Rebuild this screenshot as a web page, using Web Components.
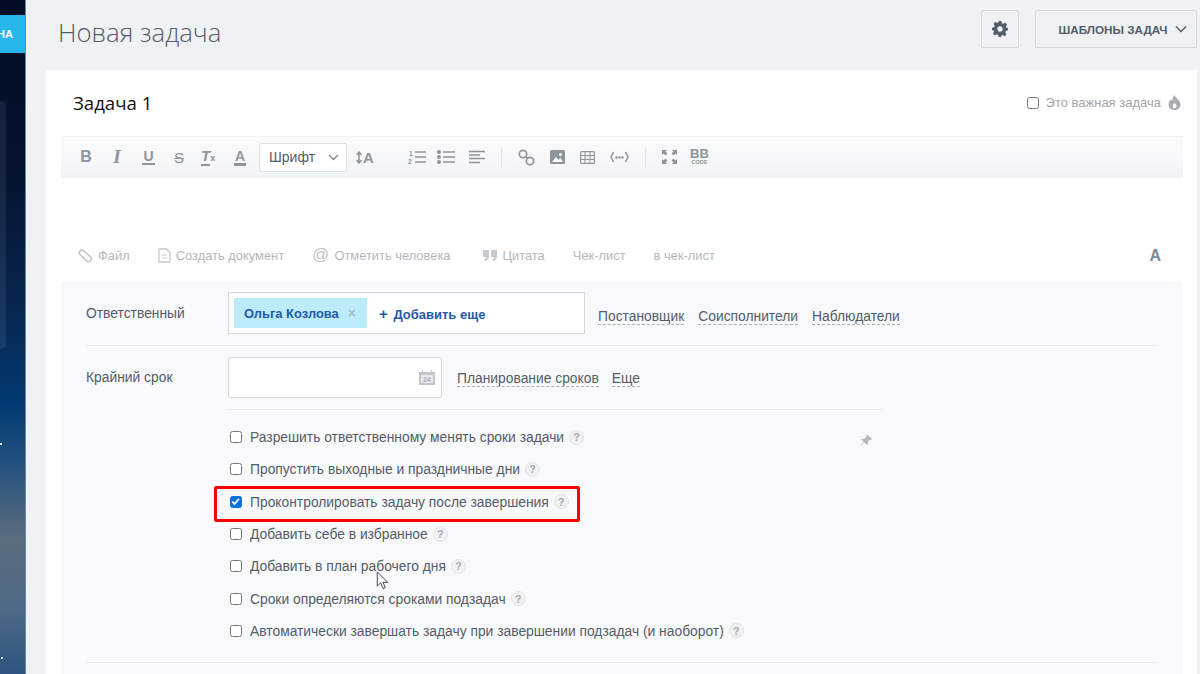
<!DOCTYPE html>
<html lang="ru"><head><meta charset="utf-8"><style>
html,body{margin:0;padding:0;width:1200px;height:674px;overflow:hidden;background:#eef2f4}
</style></head><body>
<task-page></task-page>
<script>
const def=(name,css,html)=>{customElements.define(name,class extends HTMLElement{constructor(){super();const r=this.attachShadow({mode:'open'});r.innerHTML='<style>'+css+'</style>'+html}})};
def('help-mark',':host{display:inline-flex;width:15px;height:15px;border-radius:50%;background:#eff1f3;border:1px solid #e2e5e8;box-sizing:border-box;align-items:center;justify-content:center;font:bold 10.5px "Liberation Sans",sans-serif;color:#a4a9ae;margin-left:5px;flex:none}','?');
def('check-row',`:host{display:flex;align-items:center;height:32.3px;font:13.83px "Liberation Sans",Arial,sans-serif;color:#535c69;white-space:nowrap}
.b{width:12px;height:12px;border:1.5px solid #767676;border-radius:2.5px;background:#fff;margin:0 8px 0 2px;flex:none;box-sizing:border-box;display:flex}
:host([checked]) .b{background:#0b6fde;border-color:#0b6fde}svg{display:none}:host([checked]) svg{display:block}`,
`<span class="b"><svg width="9" height="9" viewBox="0 0 9 9"><path d="M1.2 4.6 3.6 7 7.9 1.8" fill="none" stroke="#fff" stroke-width="1.8"/></svg></span><slot></slot><help-mark></help-mark>`);
def('dash-link',':host{display:inline-block;font:13.83px "Liberation Sans",Arial,sans-serif;color:#535c69;border-bottom:1px dashed #a9b0b8;line-height:16px;white-space:nowrap}','<slot></slot>');
def('foot-item',':host{display:inline-flex;align-items:center;gap:5px;font:12.9px "Liberation Sans",Arial,sans-serif;color:#b5b8bc;white-space:nowrap}','<slot></slot>');
def('task-toolbar',`:host{display:flex;align-items:center;height:42px;padding-left:18px;background:linear-gradient(#fafbfb,#f1f4f6);box-shadow:inset 0 1px 0 #f0f2f4;flex:none}
.g{font:bold 15px "Liberation Sans",Arial,sans-serif;color:#8d949c;flex:none;text-align:center}
.gl{display:flex;align-items:center;width:180px;flex:none}
.sel{width:88px;height:29px;background:#fff;border:1px solid #dfe2e5;border-radius:2px;box-sizing:border-box;display:flex;align-items:center;justify-content:space-between;padding:0 7px 0 9px;font:14px "Liberation Sans",Arial,sans-serif;color:#535c69;flex:none}
.sep{width:1px;height:19px;background:#e3e6e9;flex:none}
svg{display:block;flex:none}`,
`<div class="gl">
<span class="g" style="width:14px;font-size:16px">B</span>
<span class="g" style="width:14px;margin-left:17px;font:italic bold 19px/16px 'Liberation Serif',serif">I</span>
<span class="g" style="width:13px;margin-left:18px;font-size:14px;line-height:13px;border-bottom:2px solid #8d949c">U</span>
<span class="g" style="width:14px;margin-left:17px;font-weight:normal;font-size:15px;text-decoration:line-through">S</span>
<span class="g" style="width:17px;margin-left:15px;font:italic bold 15px/14px 'Liberation Sans',sans-serif;white-space:nowrap;text-align:left"><span style="border-bottom:2px solid #8d949c">T</span><span style="font-size:9px;font-style:normal">x</span></span>
<span class="g" style="width:12px;margin-left:16px;font-weight:bold;font-size:14px;line-height:14px;border-bottom:3px solid #8d949c">A</span>
</div>
<div class="sel"><span>Шрифт</span><svg width="11" height="7" viewBox="0 0 11 7"><path d="M1 1l4.500 4.500L10 1" fill="none" stroke="#7f868e" stroke-width="1.300"/></svg></div>
<span class="g" style="margin-left:9px;display:flex;align-items:center;font-size:15px;width:20px;white-space:nowrap"><svg width="6" height="13" viewBox="0 0 6 13" style="margin-right:1px"><path d="M3 1v11M.5 4 3 1l2.500 3M.5 9 3 12l2.500-3" fill="none" stroke="#8d949c" stroke-width="1.500"/></svg>A</span>
<svg style="margin-left:32px" width="18" height="14" viewBox="0 0 18 14"><path d="M7 2h11M7 7h11M7 12h11" fill="none" stroke="#8d949c" stroke-width="1.700"/><text x="1" y="6" font-size="6.500" font-family="Liberation Sans" font-weight="bold" fill="#8d949c">1</text><text x="0" y="13.500" font-size="6.500" font-family="Liberation Sans" font-weight="bold" fill="#8d949c">2</text></svg>
<svg style="margin-left:11px" width="18" height="14" viewBox="0 0 18 14"><g fill="#8d949c"><circle cx="2" cy="2" r="2"/><circle cx="2" cy="7" r="2"/><circle cx="2" cy="12" r="2"/></g><path d="M6 2h12M6 7h12M6 12h12" stroke="#8d949c" stroke-width="1.700"/></svg>
<svg style="margin-left:14px" width="16" height="14" viewBox="0 0 16 14"><path d="M0 1.500h16M0 5h11M0 8.500h16M0 12.500h11" stroke="#8d949c" stroke-width="1.600"/></svg>
<span class="sep" style="margin-left:16px"></span>
<svg style="margin-left:16px" width="17" height="17" viewBox="0 0 17 17"><g fill="none" stroke="#8d949c" stroke-width="1.700"><circle cx="5" cy="5" r="3.700"/><circle cx="12" cy="12" r="3.700"/><path d="M7.500 7.500l2 2"/></g></svg>
<svg style="margin-left:15px" width="15" height="14" viewBox="0 0 15 14"><rect width="15" height="14" rx="1.500" fill="#8d949c"/><path d="M2 12l4-5 2.500 3 2-2L13 12z" fill="#fff"/><circle cx="10.500" cy="4.500" r="1.500" fill="#fff"/></svg>
<svg style="margin-left:15px" width="15" height="13" viewBox="0 0 15 13"><rect x=".6" y=".6" width="13.800" height="11.800" rx="1" fill="none" stroke="#8d949c" stroke-width="1.200"/><path d="M.6 4.500h13.800M.6 8.500h13.800M5 .6v11.800M10 .6v11.800" stroke="#8d949c" stroke-width="1"/></svg>
<svg style="margin-left:15px" width="19" height="12" viewBox="0 0 19 12"><path d="M3.500 1 1 6l2.500 5M15.500 1 18 6l-2.500 5" fill="none" stroke="#8d949c" stroke-width="1.500"/><g fill="#8d949c"><circle cx="6.500" cy="6.500" r="1.200"/><circle cx="9.500" cy="6.500" r="1.200"/><circle cx="12.500" cy="6.500" r="1.200"/></g></svg>
<span class="sep" style="margin-left:16px"></span>
<svg style="margin-left:16px" width="15" height="14" viewBox="0 0 15 14"><g fill="#8d949c"><path d="M0 0h5L3.500 1.500 5.500 3.500 3.500 5.500 1.500 3.500 0 5zM15 0h-5l1.500 1.500L9.500 3.500l2 2 2-2L15 5zM0 14h5l-1.500-1.500 2-2-2-2-2 2L0 9zM15 14h-5l1.500-1.500-2-2 2-2 2 2L15 9z"/></g></svg>
<span style="margin-left:14px;display:flex;flex-direction:column;align-items:center;color:#8d949c;width:17px;flex:none"><span style="font:bold 13px/11px 'Liberation Sans',sans-serif">BB</span><span style="font:bold 5.500px/7px 'Liberation Sans',sans-serif">CODE</span></span>`);
def('task-page',`:host{display:block;position:relative;width:1200px;height:674px;overflow:hidden;font-family:"Liberation Sans",Arial,sans-serif}
.wrap{display:flex;height:674px}
.side{width:25px;flex:none;border-right:1px solid #6e8294;position:relative;background:linear-gradient(#010d26 0,#04132f 25%,#07264f 45%,#033a72 60%,#1f4f7e 68%,#5c6d7e 80%,#4e6a87 90%,#2d557f 100%);overflow:hidden}
.brand{background:#27b6ea;height:38px;margin-top:15px;display:flex;align-items:center;justify-content:flex-end;padding-right:12px;font:bold 11px "Liberation Sans",sans-serif;color:#fff;white-space:nowrap;overflow:hidden}
.pan{position:absolute;left:-20px;top:101px;width:26px;height:248px;border-radius:5px;background:rgba(255,255,255,.07)}
.dot{position:absolute;width:2px;height:2px;background:#d8dde2}
.main{flex:1;min-width:0;background:#eef2f4;border-left:1px solid #f4f6f7;display:flex;flex-direction:column}
.hd{height:70px;box-sizing:border-box;display:flex;align-items:center;flex:none;padding:0 3px 12px 31px}
h1{margin:6px 0 0;font:300 25.7px "Open Sans",sans-serif;color:#535c69;flex:1;white-space:nowrap}
.btn{height:38px;border:1px solid #d5dade;border-radius:2px;background:#eef2f4;box-sizing:border-box;display:flex;align-items:center;justify-content:center;flex:none}
.card{margin:0 3px 0 19px;background:#fff;flex:1;display:flex;flex-direction:column;min-height:0}
.top{height:66px;flex:none;display:flex;align-items:center;padding:0 16px 1px 27px;box-sizing:border-box}
.name{font:18.6px "Open Sans",sans-serif;color:#111;flex:1}
.imp{display:flex;align-items:center;font:13px "Liberation Sans",sans-serif;color:#a2a6ab}
.cb{width:12px;height:12px;border:1.500px solid #767676;border-radius:2.500px;margin-right:7px;box-sizing:border-box}
.edit{margin:0 14px 0 15px;display:flex;flex-direction:column;flex:1}
.blank{height:57px;flex:none}
.foot{height:40px;display:flex;align-items:center;padding:0 22px 0 17px;flex:none;margin-bottom:7px}
.foot foot-item{margin-right:28px}
.foot foot-item.wide{margin-right:33px}
.A{margin-left:auto;font:bold 16px "Liberation Sans",sans-serif;color:#7f8790;padding-top:1px}
.panel{background:#f8f9fb;flex:1;padding:0 26px 0 25px}
.row{display:flex;position:relative}
.r1{height:64px;border-bottom:1px solid #e8eaed;box-sizing:border-box;padding-top:10px}
.lab{width:142px;font:13.83px "Liberation Sans",sans-serif;color:#535c69;flex:none;padding-top:13px}
.box{background:#fff;border:1px solid #d5d9dd;box-sizing:border-box}
.r1 .box{width:357px;height:42px;display:flex;align-items:center;padding:0 5px;flex:none}
.tag{height:30px;background:#bcebfc;display:flex;align-items:center;padding:0 11px 0 10px;font:bold 12.9px "Liberation Sans",sans-serif;color:#1f5aa8;white-space:nowrap;width:133px;box-sizing:border-box;justify-content:space-between}
.x{color:#a3bcc8;font:bold 14px "Liberation Sans",sans-serif}
.add{margin-left:12px;font:bold 13px "Liberation Sans",sans-serif;color:#1f5aa8;white-space:nowrap}
.plus{font-size:15px;margin-right:2px}
.links{display:flex;gap:14px;margin-left:13px;padding-top:16px;align-items:flex-start}
.r2{height:64px;padding-top:11px;box-sizing:border-box}
.r2 .box{width:214px;height:41px;border-radius:2px;display:flex;align-items:center;justify-content:flex-end;padding-right:6px;flex:none}
.r2 .lab{padding-top:12px}
.r2 .links{padding-top:13px;margin-left:15px;gap:13px}
.opts{margin-left:142px;width:655px;border-top:1px solid #e8eaed;padding-top:11px;position:relative;margin-top:-1px}
.pin{position:absolute;left:631px;top:24px}
.hr{height:1px;background:#e8eaed;margin-top:15px}
.red{position:absolute;left:214px;top:486px;width:366px;height:36px;border:3px solid #f00;border-radius:2px;box-sizing:border-box;pointer-events:none}
.cur{position:absolute;left:376px;top:571px}`,
`<div class="wrap">
<aside class="side"><div class="brand">НА</div><div class="pan"></div><span class="dot" style="left:0;top:443px"></span><span class="dot" style="left:1px;top:657px"></span></aside>
<main class="main">
<header class="hd"><h1>Новая задача</h1>
<div class="btn" style="width:38px;margin-right:16px"><svg width="16" height="16" viewBox="0 0 24 24"><path fill="#535c69" fill-rule="evenodd" d="M10 0h4l.7 3.300 2.300 1 2.900-1.800 2.800 2.800-1.800 2.900 1 2.300L24 10v4l-3.100.7-1 2.300 1.800 2.900-2.800 2.800-2.900-1.800-2.300 1L14 24h-4l-.7-3.100-2.300-1-2.900 1.800-2.800-2.800L3.100 16l-1-2.300L0 14v-4l3.100-.7 1-2.300-1.800-2.900 2.800-2.800L7 3.100l2.300-1zM12 8a4 4 0 1 0 0 8 4 4 0 0 0 0-8z"/></svg></div>
<div class="btn" style="width:162px;font:bold 11.7px 'Liberation Sans',sans-serif;color:#535c69;gap:7px;padding-left:13px;white-space:nowrap">ШАБЛОНЫ ЗАДАЧ<svg width="12" height="8" viewBox="0 0 12 8"><path d="M1 1.500l5 5 5-5" fill="none" stroke="#535c69" stroke-width="1.400"/></svg></div>
</header>
<section class="card">
<div class="top"><div class="name">Задача 1</div><div class="imp"><span class="cb"></span>Это важная задача<svg style="margin-left:7px" width="13" height="15" viewBox="0 0 13 15"><path fill-rule="evenodd" fill="#a9adb2" d="M6.500 0c.5 2.500 6 5 6 9.500a6 5.500 0 0 1-12 0C.5 7 2 5.500 3 4c.3 1 .8 1.500 1.300 1.800C4.500 3.500 5 1.500 6.500 0zm0 8C5 9.500 4.500 10.300 4.500 11.300a2 2 0 0 0 4 0C8.500 10.300 8 9.500 6.500 8z"/></svg></div></div>
<div class="edit">
<task-toolbar></task-toolbar>
<div class="blank"></div>
<div class="foot">
<foot-item><svg width="15" height="17" viewBox="0 0 15 17"><path d="M5.500 11 2.200 6.800a2.600 2.600 0 0 1 4-3.300l5.800 7a2.800 2.800 0 0 1-4.300 3.600L3.500 9" transform="rotate(-10 7 8)" fill="none" stroke="#c6c9cc" stroke-width="1.700"/></svg>Файл</foot-item>
<foot-item><svg width="13" height="15" viewBox="0 0 13 15"><path d="M1 1h7.500L12 4.500V14H1z" fill="none" stroke="#c6c9cc" stroke-width="1.300"/><path d="M4 7h5M4 10h5" stroke="#c6c9cc"/></svg>Создать документ</foot-item>
<foot-item class="wide"><span style="font:17px 'Liberation Sans',sans-serif;color:#c0c3c7">@</span>Отметить человека</foot-item>
<foot-item><svg width="14" height="11" viewBox="0 0 14 11"><path fill="#c6c9cc" d="M0 0h6v6c0 3-2 4.500-4 5L1.500 9.500C2.500 9 3 8 3 7H0zM8 0h6v6c0 3-2 4.500-4 5L9.500 9.500c1-.5 1.500-1.500 1.500-2.500H8z"/></svg>Цитата</foot-item>
<foot-item>Чек-лист</foot-item>
<foot-item>в чек-лист</foot-item>
<span class="A">A</span>
</div>
<div class="panel">
<div class="row r1"><div class="lab">Ответственный</div><div class="box"><div class="tag">Ольга Козлова <span class="x">×</span></div><div class="add"><span class="plus">+</span> Добавить еще</div></div>
<div class="links"><dash-link>Постановщик</dash-link><dash-link>Соисполнители</dash-link><dash-link>Наблюдатели</dash-link></div></div>
<div class="row r2"><div class="lab">Крайний срок</div><div class="box"><svg width="16" height="15" viewBox="0 0 16 15"><path fill="#c2c5c9" d="M0 2h3V0h1v2h8V0h1v2h3v13H0z"/><rect x="2" y="5" width="12" height="8" fill="#e9ebed"/><text x="8" y="12" font-size="7" text-anchor="middle" font-family="Liberation Sans" fill="#a5a9ad" font-weight="bold">24</text></svg></div>
<div class="links"><dash-link>Планирование сроков</dash-link><dash-link>Еще</dash-link></div></div>
<div class="opts">
<svg class="pin" width="14" height="14" viewBox="0 0 16 16"><path fill="#b3b7bb" d="M10 1l5 5-1.500.8-1-.5-2.500 3 .2 2.200-1 1L6 9.500 2 14l-.5-.5L5.500 9l-3-2.700 1-1 2.200.2 3-2.500-.5-1z"/></svg>
<check-row>Разрешить ответственному менять сроки задачи</check-row>
<check-row>Пропустить выходные и праздничные дни</check-row>
<check-row checked>Проконтролировать задачу после завершения</check-row>
<check-row>Добавить себе в избранное</check-row>
<check-row>Добавить в план рабочего дня</check-row>
<check-row>Сроки определяются сроками подзадач</check-row>
<check-row>Автоматически завершать задачу при завершении подзадач (и наоборот)</check-row>
</div>
<div class="hr"></div>
</div>
</div>
</section>
</main></div>
<div class="red"></div>
<svg class="cur" width="13" height="19" viewBox="0 0 13 20"><path d="M1 1v15l3.500-3.500L7 18.500l2.500-1-2.500-5.500h5z" fill="#fff" stroke="#3a3f45" stroke-width="1"/></svg>`);
</script></body></html>
